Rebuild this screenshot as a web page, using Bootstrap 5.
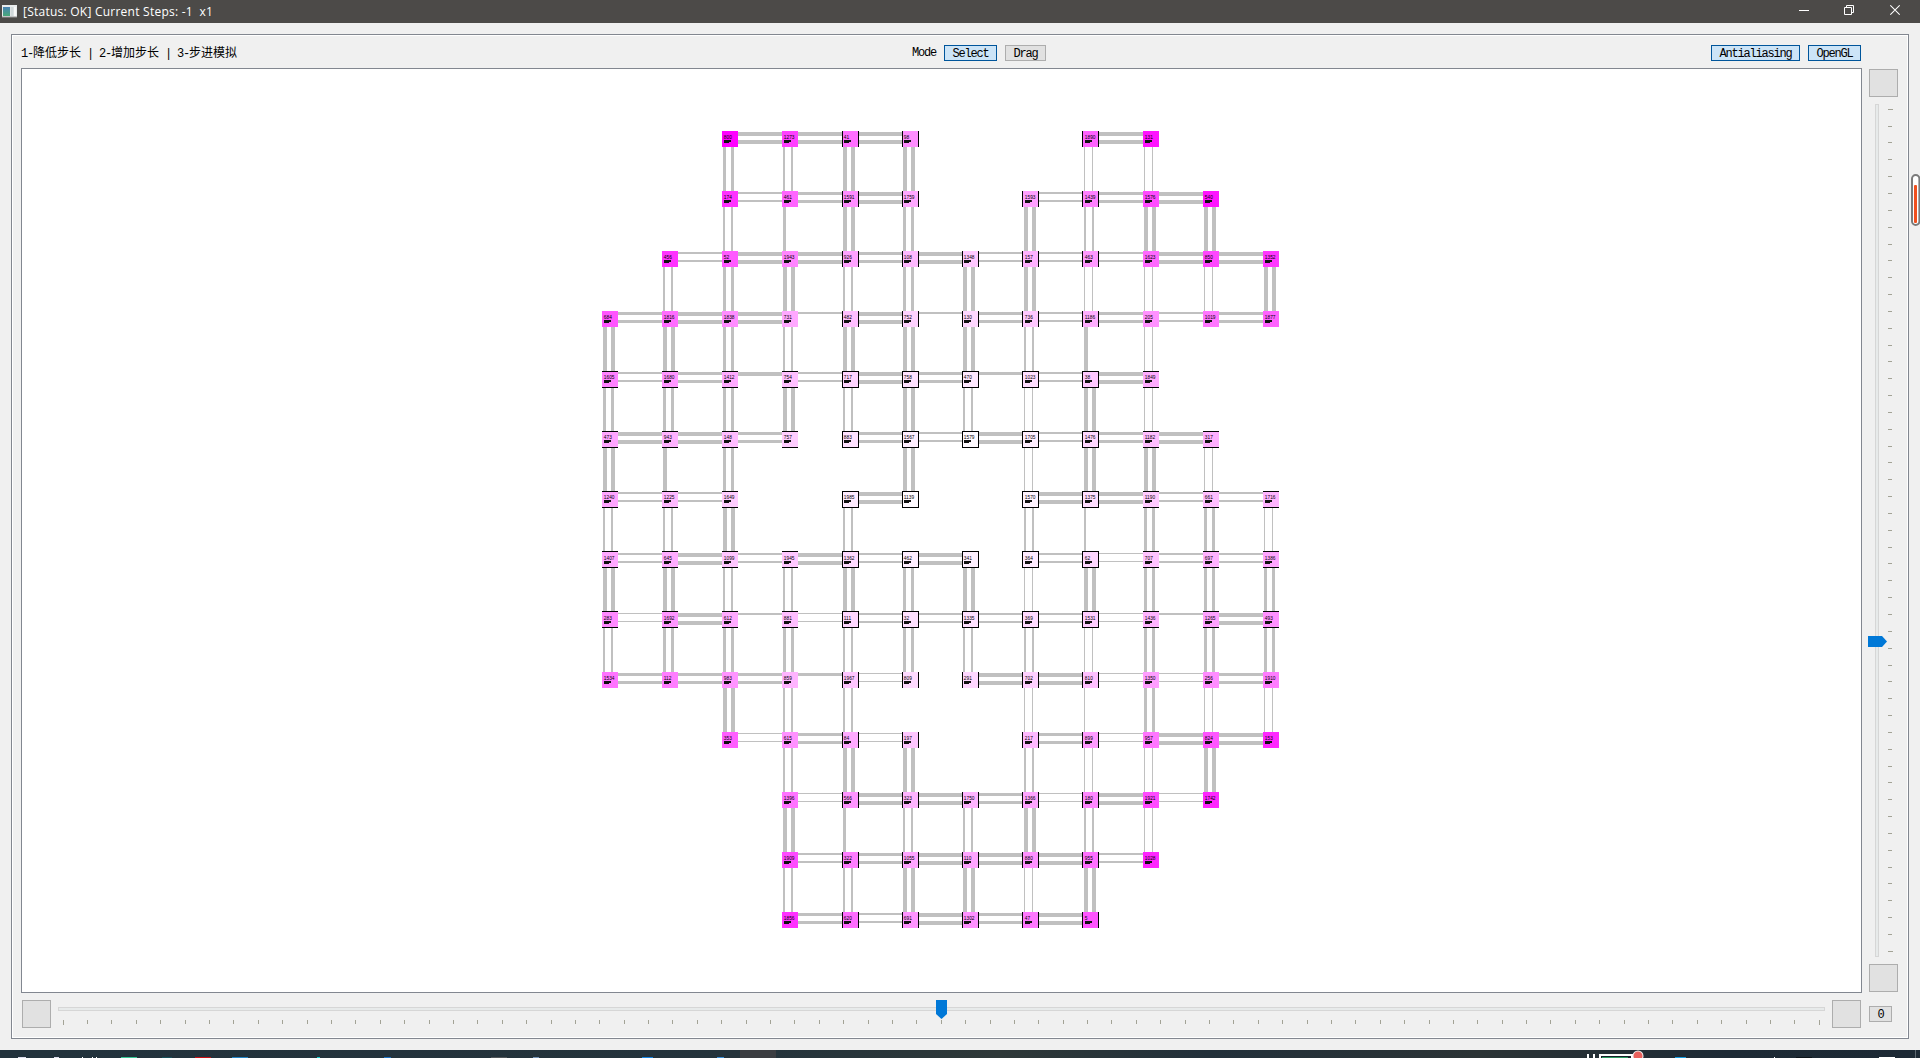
<!DOCTYPE html>
<html lang="zh-CN">
<head>
<meta charset="utf-8">
<title>[Status: OK] Current Steps: -1 x1</title>
<link href="https://cdn.jsdelivr.net/npm/bootstrap@5.3.0/dist/css/bootstrap.min.css" rel="stylesheet">
<style>
body{width:1920px;height:1058px;background:#f0f0f0;color:#000;font-family:"Liberation Mono","Noto Sans CJK SC",monospace;font-size:12px;line-height:16px}
svg{display:block}
.titlebar{height:23px;background:#4c4a48;color:#fff;font-family:"Open Sans","Noto Sans",sans-serif;font-size:12px;line-height:18px;padding-left:2px}
.title-txt{margin-left:5px;margin-top:3px;white-space:pre;letter-spacing:.24px}
.win-ctl{margin-right:20px;gap:35px;margin-top:-2px}
.work{height:1027px;padding:11px}
.frame{height:1005px;border:1px solid #828790;box-shadow:inset 0 0 0 1px #fff;padding:0 10px 1px 9px}
.tools{height:33px;padding-top:10px;width:1840px}
.hint{width:891px;font-size:12px;white-space:pre;padding-top:1px}
.asc{font-size:12px;letter-spacing:-1.2px;white-space:pre}
.tbtn{height:16px;padding:1px 0 0;border:1px solid #adadad;border-radius:0;background:#e1e1e1;color:#000;font-size:12px;letter-spacing:-1.2px;line-height:14px}
.tbtn.on{border-color:#00559b;background:#cce4f7}
.w53{width:53px}.w41{width:41px}.w89{width:89px}
.zbtn{width:29px;height:28px;padding:0;border:1px solid #adadad;border-radius:0;background:#e1e1e1;flex:none}
.view{width:1841px;height:925px;border:1px solid #828790;background:#fff;flex:none}
.side{margin-left:7px;padding-top:1px;height:925px}
.bottom-row{padding-top:7px}
.zero{width:23px;margin-left:8px;margin-top:6px}
.taskbar{height:8px;background:linear-gradient(90deg,#22323c 0,#24333b 40%,#2e3838 52%,#22303a 63%,#2b3335 77%,#1d2a35 90%,#1c2934)}
.edge-meter{position:absolute;left:1911px;top:174px}
</style>
<script src="https://cdn.jsdelivr.net/npm/bootstrap@5.3.0/dist/js/bootstrap.bundle.min.js"></script>
</head>
<body class="d-flex flex-column overflow-hidden m-0">
<header class="titlebar d-flex align-items-start">
  <svg width="16" height="14" style="margin-top:5px" viewBox="0 0 16 14"><defs><linearGradient id="ic" x2="0" y2="1"><stop stop-color="#4a83b5"/><stop offset="1" stop-color="#48a878"/></linearGradient></defs><path d="M0 0h15v12H0z" fill="#e9eced"/><path d="M1 2h7v9H1z" fill="url(#ic)"/><path d="M8.500 2h3v9h-3z" fill="#d0d8da"/><path d="M12 2h2v9h-2z" fill="#f8f8f8"/><path d="M0 12h15" stroke="#999"/></svg>
  <span class="title-txt">[Status: OK] Current Steps: -1  x1</span>
  <div class="win-ctl d-flex ms-auto">
    <svg width="10" height="23" viewBox="0 0 10 23"><path d="M0 12.500h10" stroke="#fff"/></svg>
    <svg width="11" height="23" viewBox="0 0 11 23"><path d="M.5 9.500h7v7h-7zM2.500 9.500v-2h7v7h-2" fill="none" stroke="#fff"/></svg>
    <svg width="10" height="23" viewBox="0 0 10 23"><path d="M.3 7.300l9.400 9.400M9.700 7.300L.3 16.700" stroke="#fff" stroke-width="1.200"/></svg>
  </div>
</header>
<main class="work">
  <section class="frame">
    <div class="tools d-flex">
      <div class="hint"><span class="asc">1-</span>降低步长<span class="asc"> | 2-</span>增加步长<span class="asc"> | 3-</span>步进模拟</div>
      <span class="asc">Mode</span>
      <button class="btn tbtn on w53 ms-2">Select</button>
      <button class="btn tbtn w41 ms-2">Drag</button>
      <button class="btn tbtn on w89 ms-auto">Antialiasing</button>
      <button class="btn tbtn on w53 ms-2">OpenGL</button>
    </div>
    <div class="d-flex">
      <div class="view"><svg id="graph" width="1839" height="923" viewBox="22 69 1839 923"></svg></div>
      <div class="side d-flex flex-column">
        <button class="btn zbtn"></button>
        <svg id="vslider" width="29" height="867" viewBox="1869 97 29 867" overflow="visible"></svg>
        <button class="btn zbtn"></button>
      </div>
    </div>
    <div class="bottom-row d-flex">
      <button class="btn zbtn" style="margin-left:1px"></button>
      <svg id="hslider" width="1781" height="28" viewBox="51 1000 1781 28"></svg>
      <button class="btn zbtn"></button>
      <button class="btn tbtn zero">0</button>
    </div>
  </section>
</main>
<footer class="taskbar"><svg id="tasks" width="1920" height="8"></svg></footer>
<svg class="edge-meter" width="9" height="52" viewBox="0 0 9 52"><rect x="1" y="1" width="7.400" height="50" rx="3.700" fill="#fff" stroke="#7a7a7a" stroke-width="2"/><rect x="3" y="11" width="3" height="38" rx="1" fill="#f0501e"/></svg>
<script>
// Node rows: "column label green-channel"
const nodes = [
"2 800 0,3 1273 64,4 41 110,5 98 142,8 1890 98,9 131 20",
"2 174 50,3 461 100,4 1591 140,5 1759 168,7 1593 160,8 1439 128,9 1576 75,10 540 20",
"1 456 50,2 52 90,3 1943 132,4 926 162,5 108 185,6 1348 200,7 157 178,8 463 152,9 1623 105,10 850 70,11 1352 55",
"0 684 85,1 1816 108,2 1838 140,3 731 168,4 482 190,5 752 210,6 130 215,7 736 200,8 1186 175,9 205 145,10 1019 118,11 1877 98",
"0 1605 130,1 1680 150,2 1412 170,3 754 192,4 717 212,5 758 225,6 470 232,7 1023 222,8 38 200,9 1849 172",
"0 473 165,1 943 178,2 148 188,3 757 205,4 883 225,5 1567 238,6 1579 250,7 1705 238,8 1476 215,9 1182 190,10 317 175",
"0 1240 165,1 1225 185,2 1649 205,4 1985 235,5 1139 250,7 1570 243,8 1375 222,9 1190 202,10 661 190,11 1716 180",
"0 1407 168,1 645 172,2 1099 198,3 1945 200,4 1362 218,5 462 238,6 341 240,7 364 235,8 62 215,9 707 195,10 697 178,11 1386 165",
"0 283 138,1 1692 150,2 612 170,3 881 190,4 111 215,5 32 225,6 1335 225,7 369 218,8 1531 205,9 1436 180,10 1265 162,11 493 145",
"0 1534 115,1 112 125,2 983 148,3 859 180,4 1967 198,5 809 218,6 291 215,7 702 208,8 810 192,9 1350 158,10 256 140,11 1910 125",
"2 353 95,3 615 145,4 84 170,5 197 198,7 217 185,8 899 155,9 957 118,10 824 85,11 153 40",
"3 1396 115,4 566 148,5 323 180,6 1750 180,7 1366 165,8 180 135,9 1921 75,10 1742 38",
"3 1909 75,4 322 125,5 1055 165,6 110 165,7 880 145,8 955 112,9 1028 38",
"3 1856 48,4 620 108,5 691 148,6 1302 145,7 47 120,8 5 85"];
// Links: "column:width", a trailing s marks a one-way link
const across = [
"2:4 3:4 4:4 8:4","2:2 3:3 4:4 7:2 8:3 9:4","1:2 2:4 3:4 4:3 5:4 6:2 7:2 8:2 9:4 10:4",
"0:3 1:4 2:4 3:2s 4:4 5:2s 6:3 7:2 8:3 9:2 10:3","0:2 1:3 2:4s 3:2 4:4 5:3 6:3s 7:2 8:4",
"0:4 1:4 2:3 4:3 5:2 6:4 7:2 8:3 9:4","0:2 1:2 4:4 7:4 8:4 9:2 10:2","0:2 1:4 2:2 3:4 4:2 5:4 7:2 8:1 9:2 10:2",
"0:1 1:4 2:2s 3:1 4:2 5:2 6:2 7:2 8:1 9:2s 10:4","0:3 1:3 2:3 3:3s 4:1 6:4 7:4 8:1 9:1 10:3",
"2:1 3:3 4:1 7:3 8:1 9:4 10:4","3:1 4:4 5:4 6:3 7:1 8:4 9:1","3:2 4:3 5:4 6:4 7:4 8:2","3:3 4:2 5:4 6:3 7:4"];
const down = [
"2:3 3:2 4:4 5:4 8:1 9:1","2:2 3:3s 4:4 5:3 7:4 8:2 9:4 10:4","1:2 2:3 3:4 4:2 5:3 6:4 7:4 8:1 9:1 10:1 11:4",
"0:4 1:4 2:3 3:2 4:4 5:4 6:4 7:2 8:4s 9:1","0:3 1:3 2:3 3:4 4:2 5:4 6:2 7:1 8:4 9:1","0:4 1:4s 2:3 5:4 7:1 8:4 9:4 10:1",
"0:2 1:2 2:4 4:2 7:2 8:2s 9:3 10:3 11:1","0:4 1:4 2:2 3:2 4:4 5:3 6:4 7:1 8:4 9:3 10:3 11:3",
"0:2 1:3 2:3 3:3 4:2 5:3 6:2 7:2 8:1 9:3 10:3 11:3","2:4 3:2 4:2 7:1 8:1s 9:3 10:1 11:1",
"3:2 4:4 5:4 7:2 8:1 9:1 10:4","3:4 4:3s 5:2 6:2 7:4 8:2 9:1","3:2 4:2 5:4 6:4 7:1 8:4"];
const box = (x,y,w,h,f) => `<rect x="${x}" y="${y}" width="${w}" height="${h}" fill="${f}" shape-rendering="crispEdges"/>`;
let g = "";
function links(rows, vertical){
  rows.forEach((row,r) => row.split(" ").forEach(t => {
    const [c,v] = t.split(":"), w = parseInt(v);
    for (const o of v.endsWith("s") ? [0] : [0,8])
      g += vertical ? box(603+60*c+(c>=7?1:0)+o, 140+60*r, w, 60, "#c0c0c0")
                    : box(610+60*c, 132+60*r+(r>=7?1:0)+o, 60, w, "#c0c0c0");
  }));
}
links(across,false); links(down,true);
nodes.forEach((row,r) => row.split(",").forEach(t => {
  const [c,label,green] = t.split(" "), x = 602+60*c, y = 131+60*r;
  const sx = c>=7?1:0, sy = r>=9?1:0, ty = r>=7?1:0;
  g += box(x+sx, y+sy, 16, 16, `rgb(255,${green},255)`);
  if (c>=4 && c<=8) g += box(x,y+sy,1,16,"#000") + box(x+16,y+sy,1,16,"#000");
  if (r>=4 && r<=8){ const bw = c>=4&&c<=8 ? 17 : 16, bx = bw==17 ? x : x+sx; g += box(bx,y,bw,1,"#000") + box(bx,y+16,bw,1,"#000"); }
  g += `<text x="${x+sx+1.800}" y="${y+ty+8}" font-family="Liberation Sans,sans-serif" font-size="4.8">${label}</text>`;
  g += box(x+sx+2,y+ty+9,7,2,"#101010") + box(x+sx+2,y+ty+11,5,1,"#101010");
}));
graph.innerHTML = g;

const tick = "#a3a396";
let v = box(1875,104,4,853,"#d6d6d6") + box(1876,105,2,851,"#e7eaea");
for (let i=0;i<=50;i++) v += box(1888, Math.floor(109.3+i*16.84), i%50?4:5, 1, tick);
v += '<path d="M1868 636h14l5 5.500-5 5.500h-14z" fill="#0078d7"/>';
vslider.innerHTML = v;
let h = box(58,1007,1767,4,"#d6d6d6") + box(59,1008,1765,2,"#e7eaea");
for (let i=0;i<=72;i++) h += box(Math.floor(63.200+i*24.390), 1020, 1, i%72?4:5, tick);
h += '<path d="M936 1000h11v14l-5.500 5-5.500-5z" fill="#0078d7"/>';
hslider.innerHTML = h;

// Visible top slice of the desktop taskbar
tasks.innerHTML = box(740,0,36,8,"#3b3d41") + [[18,8,"#dde"],[54,5,"#dde"],[82,1,"#fff"],[92,1,"#fff"],[96,1,"#fff"],[121,16,"#35c795"],[162,10,"#17505a"],[195,16,"#c80f14"],[232,16,"#2383c4"],[317,3,"#1cc"],[384,7,"#1b72c4"],[491,16,"#50565a"],[533,6,"#7291b5"],[642,11,"#1684e0"],[717,7,"#3b90d8"],[1675,11,"#139be0"],[1774,1,"#fff"],[1796,16,"#0c141a"],[1879,16,"#fff"]].map(a=>box(a[0],7,a[1],1,a[2])).join("")
 + box(1587,4,2,4,"#fff") + box(1593,4,2,4,"#fff") + box(1599,4,36,4,"#fff") + box(1601,6,30,2,"#15202a") + box(1602,7,26,1,"#2b9a62")
 + '<circle cx="1638" cy="6" r="5.500" fill="#eee"/><circle cx="1638" cy="6" r="4.500" fill="#e9605c"/>' + box(1915,0,1,8,"#5d6870");
</script>
</body>
</html>
